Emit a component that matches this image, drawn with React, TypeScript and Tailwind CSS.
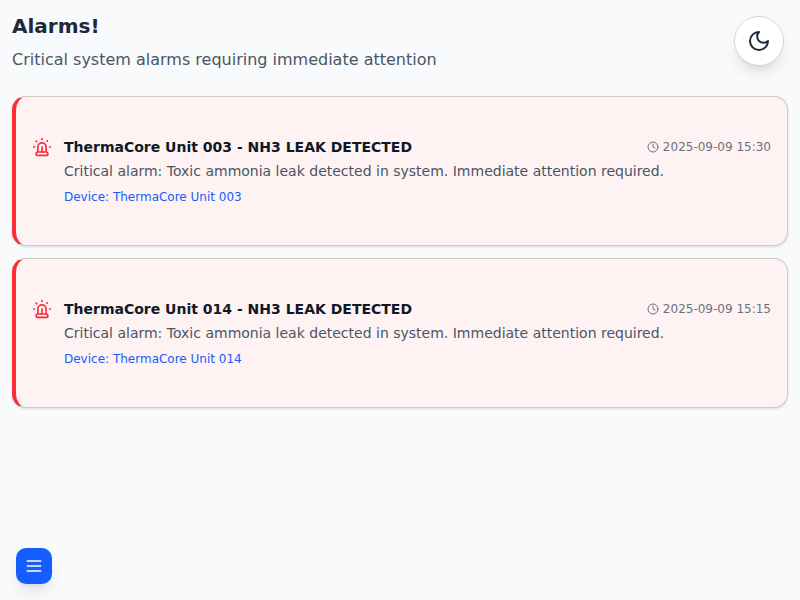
import { Clock, Siren } from "lucide-react";

const alarms = [
  { unit: "003", time: "2025-09-09 15:30" },
  { unit: "014", time: "2025-09-09 15:15" },
];

function AlarmCard({ unit, time }: { unit: string; time: string }) {
  return (
    <div className="flex h-[150px] flex-col rounded-[14px] border border-l-4 border-[#cbcbcb] border-l-[#fb2c36] bg-red-50 px-4 pt-10 shadow-sm">
      <div className="flex items-start gap-3">
        <Siren className="h-5 w-5 shrink-0 text-[#fb2c36]" />
        <div className="min-w-0 flex-1">
          <div className="flex items-center justify-between">
            <h3 className="text-sm font-semibold text-gray-900">
              ThermaCore Unit {unit} - NH3 LEAK DETECTED
            </h3>
            <div className="flex items-center gap-1 text-xs text-gray-500">
              <Clock className="h-3 w-3" />
              <span>{time}</span>
            </div>
          </div>
          <p className="mt-1 text-sm text-gray-600">
            Critical alarm: Toxic ammonia leak detected in system. Immediate attention required.
          </p>
          <p className="mt-2 text-xs text-blue-600">Device: ThermaCore Unit {unit}</p>
        </div>
      </div>
    </div>
  );
}

export default function App() {
  return (
    <div className="relative min-h-screen bg-[#f9fafb] p-3 font-['DejaVu_Sans',sans-serif]">
      <header>
        <h1 className="text-xl font-bold text-gray-800">Alarms!</h1>
        <p className="mt-2 text-base text-gray-600">
          Critical system alarms requiring immediate attention
        </p>
      </header>
      <main className="mt-6 space-y-3">
        {alarms.map((a) => (
          <AlarmCard key={a.unit} unit={a.unit} time={a.time} />
        ))}
      </main>
      <button
        aria-label="Toggle theme"
        className="fixed top-4 right-4 flex h-[50px] w-[50px] items-center justify-center rounded-full border border-gray-300 bg-white text-gray-800 shadow-lg"
      >
        <svg
          viewBox="0 0 24 24"
          className="h-6 w-6"
          fill="none"
          stroke="currentColor"
          strokeWidth="2"
          strokeLinecap="round"
          strokeLinejoin="round"
        >
          <path d="M12 3a6 6 0 0 0 9 9 9 9 0 1 1-9-9Z" />
        </svg>
      </button>
      <button
        aria-label="Open menu"
        className="fixed bottom-4 left-4 flex h-9 w-9 items-center justify-center rounded-[10px] bg-[#155dfc] text-white shadow-lg"
      >
        <svg
          viewBox="0 0 24 24"
          className="h-5 w-5"
          fill="none"
          stroke="currentColor"
          strokeWidth="2"
          strokeLinecap="round"
        >
          <path d="M4 6h16M4 12h16M4 18h16" />
        </svg>
      </button>
    </div>
  );
}
